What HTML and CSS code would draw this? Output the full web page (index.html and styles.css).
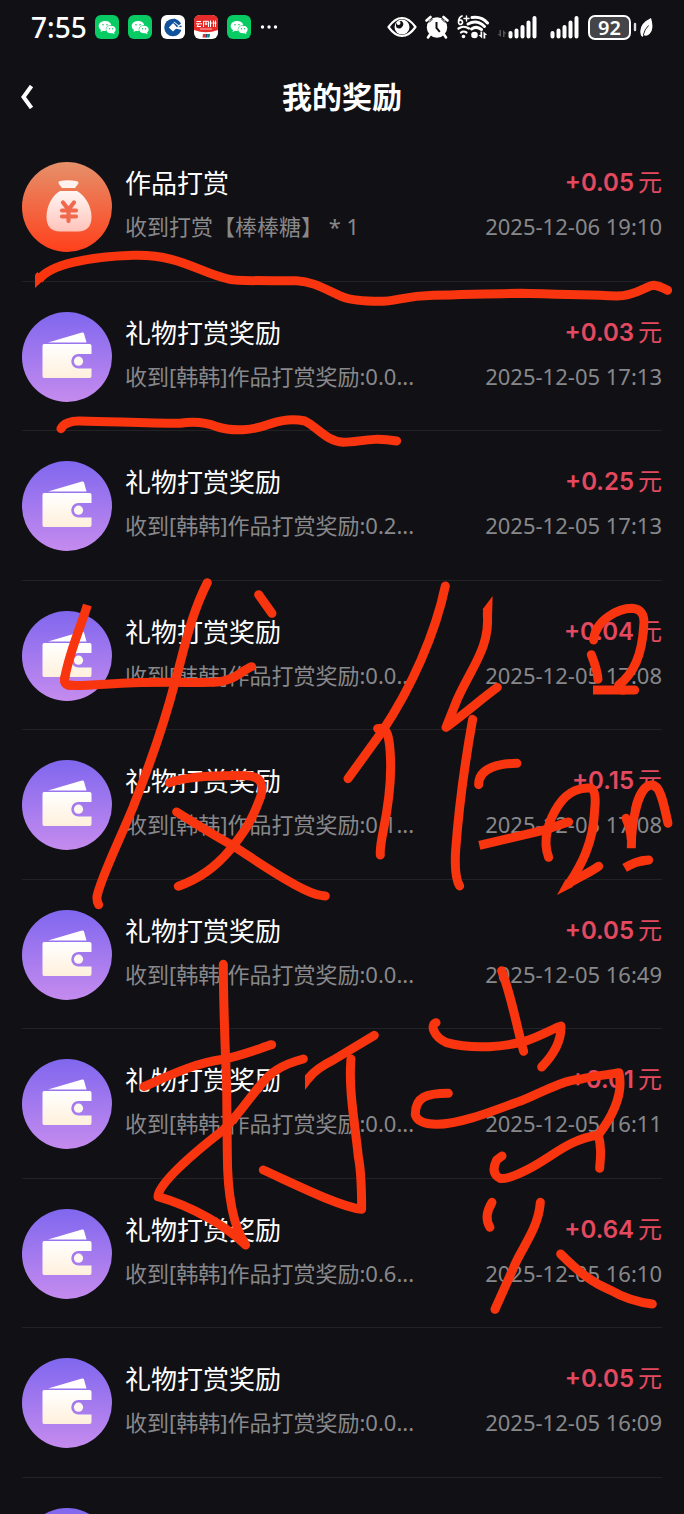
FILE: index.html
```html
<!DOCTYPE html>
<html lang="zh-CN">
<head>
<meta charset="utf-8">
<meta name="viewport" content="width=device-width, initial-scale=1">
<title>我的奖励</title>
<link rel="stylesheet" href="styles.css">
</head>
<body>
<svg class="defs" aria-hidden="true">
  <defs>
    <linearGradient id="purple" x1="0" y1="0" x2="0" y2="1"><stop offset="0" stop-color="#8067ee"/><stop offset="1" stop-color="#c58bee"/></linearGradient>
    <linearGradient id="orange" x1="0" y1="0" x2="0" y2="1"><stop offset="0" stop-color="#e5906a"/><stop offset="1" stop-color="#ff401c"/></linearGradient>
    <linearGradient id="cream" x1="0" y1="0" x2="0" y2="1"><stop offset="0" stop-color="#ffffff"/><stop offset="1" stop-color="#fff0dc"/></linearGradient>
    <linearGradient id="blush" x1="0" y1="0" x2="0" y2="1"><stop offset="0" stop-color="#fff6f3"/><stop offset="1" stop-color="#ffc3ba"/></linearGradient>
  </defs>
  <symbol id="wallet" viewBox="0 0 90 90">
    <circle cx="45" cy="45" r="45" fill="url(#purple)"/>
    <path d="M26 30.500 60 20.500Q61.500 20 62 21.500L64.500 30.500Z" fill="#fff"/>
    <path d="M22 32H67.500Q69.500 32 69.500 34V42H56.500A7.200 7.200 0 0 0 56.500 56.500H69.500V64Q69.500 66 67.500 66H22Q20.500 66 20.500 64V34Q20.500 32 22 32Z" fill="url(#cream)"/>
    <circle cx="56.500" cy="49.200" r="4.600" fill="#fff8ee"/>
  </symbol>
  <symbol id="bag" viewBox="0 0 90 90">
    <circle cx="45" cy="45" r="45" fill="url(#orange)"/>
    <path d="M38 19Q46 17.500 54 19Q57.500 19.500 56 22L53 26H40L37 22Q35.500 19.500 38 19Z" fill="#fff2ee"/>
    <path d="M38 29H55C62 33 69.500 43 69.500 55Q69.500 69 56 69.500H38Q24.500 69 24.500 55C24.500 43 31 33 38 29Z" fill="url(#blush)"/>
    <path d="M41 40.500 46.500 47.500 52 40.500M40 48.500H54M40 54.500H54M46.500 48V59" fill="none" stroke="#f0694c" stroke-width="4.200" stroke-linecap="round"/>
  </symbol>
  <symbol id="wechat" viewBox="0 0 24 24">
    <rect width="24" height="24" rx="6" fill="#08cb63"/>
    <path d="M10 6C6.400 6 3.700 8.300 3.700 11.100C3.700 12.800 4.600 14.100 6 15L5.500 17 8 15.800Q9.500 16.200 10.800 16Q9.800 10.800 16.200 10Q15.300 6 10 6Z" fill="#fff"/>
    <path d="M16 10.800C13 10.800 11.200 12.500 11.200 14.600C11.200 17.200 14 18.900 17.500 18.200L19.500 19.200 19.100 17.400Q20.700 16.200 20.700 14.600C20.700 12.500 18.700 10.800 16 10.800Z" fill="#fff"/>
    <g fill="#08cb63"><circle cx="8" cy="9.700" r=".8"/><circle cx="12" cy="9.700" r=".8"/><circle cx="14.500" cy="13.700" r=".7"/><circle cx="17.600" cy="13.700" r=".7"/></g>
  </symbol>
  <symbol id="signal" viewBox="0 0 30 24">
    <path d="M2.500 18V21.500M8.500 15.500V21.500M14.500 12V21.500M20.500 7.500V21.500M26.500 3V21.500" fill="none" stroke="#fff" stroke-width="4" stroke-linecap="round"/>
  </symbol>
</svg>

<div class="screen">
  <div class="status">
    <div class="status-left">
      <span class="clock">7:55</span>
      <svg class="app"><use href="#wechat"/></svg>
      <svg class="app"><use href="#wechat"/></svg>
      <svg class="app" viewBox="0 0 24 24">
        <rect width="24" height="24" rx="6" fill="#fff"/>
        <circle cx="12" cy="12.500" r="8.700" fill="#10529b"/>
        <path d="M12 8.200 16.200 12.400 12 16.600 7.800 12.400Z" fill="#fff"/>
        <path d="M14 12 22 12.300V15.300L14.500 13.500Z" fill="#fff"/>
        <path d="M12 9 15 3 22 9 17.500 12Z" fill="#fff"/>
        <path d="M13 3.500Q17.500 4.500 20 8.500L17.800 10.300 11.800 5.500Z" fill="#10529b"/>
        <path d="M12.500 7 17 10.800 16 11.800 12.300 8.300Z" fill="#10529b"/>
      </svg>
      <svg class="app" viewBox="0 0 24 24">
        <rect width="24" height="24" rx="6" fill="#fff"/>
        <path d="M6 0H18Q24 0 24 6V15Q12 19.500 0 15V6Q0 0 6 0Z" fill="#e52c2a"/>
        <path d="M2.500 6.500H7M2 8.800H8M4.500 9 3 11.500H7M9.500 6V12M9.500 6.300H14.500V12M12 6.500V10M10.700 9H13.500M16.500 5.500V12M15.500 8H18M19.500 5.500V12M18.500 8H22.500M21.500 5.500V12" fill="none" stroke="#fff" stroke-width="1"/>
        <path d="M6 14H18" stroke="#ffb9b0" stroke-width="1"/>
        <path d="M9 19H12L11 22.500H8.500Z" fill="#d8323c"/><path d="M12 19H14L13 22.500H11Z" fill="#18447e"/><path d="M14 19H16L15.500 22.500H13Z" fill="#118078"/>
      </svg>
      <svg class="app"><use href="#wechat"/></svg>
      <svg class="more" viewBox="0 0 18 6" fill="#fff"><circle cx="2.500" cy="3" r="1.700"/><circle cx="9" cy="3" r="1.700"/><circle cx="15.500" cy="3" r="1.700"/></svg>
    </div>
    <div class="status-right">
      <svg class="eye" viewBox="0 0 30 22">
        <path d="M1.500 11Q8 2 15 2T28.500 11Q22 20 15 20T1.500 11Z" fill="none" stroke="#fff" stroke-width="2.200" stroke-linejoin="round"/>
        <circle cx="15" cy="11" r="7.500" fill="#fff"/>
        <path d="M14.500 5A4 4 0 1 1 9.500 11.500Q7.800 7.500 10.500 5.500Z" fill="#111115"/>
        <circle cx="11.500" cy="7" r="2" fill="#fff"/>
      </svg>
      <svg class="alarm" viewBox="0 0 24 24">
        <circle cx="12" cy="12.500" r="10.200" fill="#fff"/>
        <path d="M1.500 5.500 5.500 2M22.500 5.500 18.500 2M5 19.500 3 22.500M19 19.500 21 22.500" stroke="#fff" stroke-width="2.600" stroke-linecap="round"/>
        <path d="M4 7.500 7.500 4M20 7.500 16.500 4" stroke="#111115" stroke-width="1"/>
        <path d="M11.500 7V13L14.800 16.800" fill="none" stroke="#111115" stroke-width="2"/>
      </svg>
      <svg class="wifi" viewBox="0 0 32 24">
        <g fill="none" stroke="#fff" stroke-linecap="round">
          <path d="M5 1Q1.500 2.500 1.500 7M1.500 7.500A2 2.200 0 1 0 2.300 5.500" stroke-width="1.700"/>
          <path d="M9.500 1V6M7 3.500H12" stroke-width="1.400"/>
          <path d="M15 2.500Q24.500 1 30.500 8" stroke-width="3"/>
          <path d="M11 9Q20 4 27.500 11.500" stroke-width="3"/>
          <path d="M14.500 14Q19.500 10.500 24.500 14.500" stroke-width="3"/>
          <path d="M1.500 13.500Q6.500 10 12 13.500M4 17.500Q6.500 15.500 9.500 17.500" stroke-width="2.200"/>
        </g>
        <g fill="#fff"><circle cx="6.500" cy="21.500" r="1.800"/><circle cx="17.500" cy="20" r="3.300"/><path d="M25.200 16.500V23.500L21.500 20H23.500V16.500ZM26.500 23.500V16.500L30.200 20H28.300V23.500Z"/></g>
      </svg>
      <svg class="traffic" viewBox="0 0 10 24"><path d="M4 15V22L.5 19H2.500V15ZM6 22V15L9.500 18.500H7.500V22Z" fill="#55555a"/></svg>
      <svg class="bars"><use href="#signal"/></svg>
      <svg class="bars bars-second"><use href="#signal"/></svg>
      <span class="battery">92</span>
      <svg class="leaf" viewBox="0 0 20 24">
        <path d="M2 9V15" stroke="#ddd" stroke-width="2.400" stroke-linecap="round"/>
        <path d="M18 3Q21.500 14 16.500 19Q13.500 22 10.500 20L9.500 22 8 20.500Q4.500 9.500 18 3Z" fill="#fff"/>
        <path d="M15.500 10.500Q11.500 14.500 10.300 20" fill="none" stroke="#111115" stroke-width=".9"/>
      </svg>
    </div>
  </div>

  <header class="header">
    <button class="back" type="button" aria-label="返回">
      <svg viewBox="0 0 14 24"><path d="M11.500 1 3.500 12 11.500 23" fill="none" stroke="#fff" stroke-width="4"/></svg>
    </button>
    <h1 class="title">我的奖励</h1>
  </header>

  <ul class="list">
    <li class="row"><svg class="icon"><use href="#bag"/></svg><div class="info"><div class="name">作品打赏</div><div class="note">收到打赏【棒棒糖】 * 1</div></div><div class="side"><div class="amount">+0.05<span class="unit">元</span></div><time class="date">2025-12-06 19:10</time></div></li>
    <li class="row"><svg class="icon"><use href="#wallet"/></svg><div class="info"><div class="name">礼物打赏奖励</div><div class="note">收到[韩韩]作品打赏奖励:0.0...</div></div><div class="side"><div class="amount">+0.03<span class="unit">元</span></div><time class="date">2025-12-05 17:13</time></div></li>
    <li class="row"><svg class="icon"><use href="#wallet"/></svg><div class="info"><div class="name">礼物打赏奖励</div><div class="note">收到[韩韩]作品打赏奖励:0.2...</div></div><div class="side"><div class="amount">+0.25<span class="unit">元</span></div><time class="date">2025-12-05 17:13</time></div></li>
    <li class="row"><svg class="icon"><use href="#wallet"/></svg><div class="info"><div class="name">礼物打赏奖励</div><div class="note">收到[韩韩]作品打赏奖励:0.0...</div></div><div class="side"><div class="amount">+0.04<span class="unit">元</span></div><time class="date">2025-12-05 17:08</time></div></li>
    <li class="row"><svg class="icon"><use href="#wallet"/></svg><div class="info"><div class="name">礼物打赏奖励</div><div class="note">收到[韩韩]作品打赏奖励:0.1...</div></div><div class="side"><div class="amount">+0.15<span class="unit">元</span></div><time class="date">2025-12-05 17:08</time></div></li>
    <li class="row"><svg class="icon"><use href="#wallet"/></svg><div class="info"><div class="name">礼物打赏奖励</div><div class="note">收到[韩韩]作品打赏奖励:0.0...</div></div><div class="side"><div class="amount">+0.05<span class="unit">元</span></div><time class="date">2025-12-05 16:49</time></div></li>
    <li class="row"><svg class="icon"><use href="#wallet"/></svg><div class="info"><div class="name">礼物打赏奖励</div><div class="note">收到[韩韩]作品打赏奖励:0.0...</div></div><div class="side"><div class="amount">+0.01<span class="unit">元</span></div><time class="date">2025-12-05 16:11</time></div></li>
    <li class="row"><svg class="icon"><use href="#wallet"/></svg><div class="info"><div class="name">礼物打赏奖励</div><div class="note">收到[韩韩]作品打赏奖励:0.6...</div></div><div class="side"><div class="amount">+0.64<span class="unit">元</span></div><time class="date">2025-12-05 16:10</time></div></li>
    <li class="row"><svg class="icon"><use href="#wallet"/></svg><div class="info"><div class="name">礼物打赏奖励</div><div class="note">收到[韩韩]作品打赏奖励:0.0...</div></div><div class="side"><div class="amount">+0.05<span class="unit">元</span></div><time class="date">2025-12-05 16:09</time></div></li>
    <li class="row"><svg class="icon"><use href="#wallet"/></svg></li>
  </ul>

  <svg class="ink" viewBox="0 0 684 1514" aria-hidden="true">
    <g transform="translate(0 140) scale(.3333)">
      <path class="butt" d="M116 420C150 372 270 350 400 346C540 342 600 400 690 418C720 424 840 422 890 422C940 424 980 450 1026 470"/>
      <path d="M1026 470C1046 478 1080 484 1140 484C1190 484 1210 468 1300 466C1400 464 1500 460 1560 460C1650 462 1750 464 1850 468C1910 468 1940 436 1962 436C1978 438 1990 444 2003 451"/>
      <path class="tip" d="M105 405V444L135 416L112 396Z"/>
      <path d="M183 866C190 850 215 842 240 843C350 845 430 850 540 850C580 844 620 848 650 860C700 876 760 870 800 855C850 838 880 836 915 843C950 860 980 905 1030 907C1080 907 1110 890 1190 903"/>
    </g>
    <g transform="translate(0 560) scale(.3333)">
      <path class="butt" d="M262 135C250 180 210 270 195 350Q188 376 215 376"/>
      <path d="M195 350Q188 376 215 376C260 378 330 370 400 368C500 366 590 368 640 367C700 365 720 335 755 320"/>
      <path d="M776 104 816 160"/>
      <path d="M622 68C570 170 550 280 524 370C480 540 430 660 400 740C350 860 300 960 291 1010Q290 1025 296 1034"/>
      <path d="M508 668C560 650 640 645 740 647Q800 650 782 710C750 800 720 830 690 870C640 930 590 960 535 979"/>
      <path d="M530 756C600 800 650 830 697 856C780 910 850 960 920 992Q950 1006 976 1008"/>
    </g>
    <g transform="translate(342 560) scale(.3333)">
      <path d="M310 78C280 220 210 380 120 515L18 656"/>
      <path d="M107 506C130 500 145 510 146 620C146 760 110 840 115 885"/>
      <path class="tip" d="M452 108 422 148 430 175 450 175Z"/>
      <path d="M436 160C445 260 390 320 345 420L312 502C370 460 420 415 466 382"/>
      <path d="M392 478C370 600 350 750 341 870Q336 950 353 978"/>
      <path d="M410 674C410 620 480 610 525 610"/>
      <path class="butt" d="M412 856 600 812"/><path d="M600 812C640 802 660 790 680 786"/>
      <path d="M755 240C760 180 830 145 870 145Q912 148 905 200C900 290 870 345 830 375"/>
      <path d="M748 284Q766 330 768 358"/>
      <path class="butt" d="M753 390H850"/><path d="M840 390H878"/>
      <path d="M620 892C600 840 620 780 650 735C680 690 720 682 745 684Q765 690 758 750C755 850 715 920 682 970"/>
      <path d="M682 970C710 952 740 940 770 919"/>
      <path class="tip" d="M645 1005 671 958 692 981Z"/>
      <path d="M852 775Q866 805 868 840"/>
      <path class="butt" d="M868 865C868 780 890 675 930 675"/>
      <path d="M880 750C890 700 910 675 930 675C955 675 965 730 978 790"/>
      <path class="butt" d="M848 924Q880 905 910 901"/><path d="M900 903 920 900"/>
    </g>
    <g transform="translate(100 940) scale(.3333)">
      <path d="M370 73C370 200 375 300 380 440L382 640C382 760 400 860 437 915C380 860 280 800 174 770C175 730 280 640 370 570C440 500 480 420 530 390Q560 370 610 357"/>
      <path d="M132 440C200 410 280 370 370 358C430 345 480 325 515 314"/>
      <path d="M628 412Q650 385 700 360L823 286"/><path class="tip" d="M615 405V450L640 418Z"/>
      <path d="M753 357C745 450 765 550 775 650C785 700 785 750 785 808C720 800 600 740 490 690"/>
    </g>
    <g transform="translate(380 940) scale(.3333)">
      <path d="M168 248C150 255 160 290 200 308C280 330 380 320 440 302C490 285 520 265 543 258Q545 320 485 381"/>
      <path d="M365 92C395 170 410 260 431 334"/>
      <path d="M205 460C140 460 105 470 106 525Q115 553 170 553C250 553 370 500 430 480C520 440 560 420 600 418C650 405 690 405 717 398Q735 480 655 585C560 600 520 650 440 690Q380 720 360 715Q330 700 350 660L366 648"/>
      <path d="M655 585C665 620 662 650 659 685"/>
      <path d="M336 787Q310 830 330 862"/>
      <path d="M481 787C475 870 420 930 400 985L345 1108"/>
      <path d="M542 942C600 1000 640 1030 690 1050Q750 1085 817 1092"/>
    </g>
  </svg>
</div>
</body>
</html>
```

FILE: styles.css
```css
* {
  box-sizing: border-box;
}

body {
  margin: 0;
  background: #111115;
  color: #fff;
  font-family: "Noto Sans", "Noto Sans CJK SC", sans-serif;
}

.defs {
  position: absolute;
  width: 0;
  height: 0;
}

.screen {
  position: relative;
  display: flex;
  flex-direction: column;
  height: 100vh;
  overflow: hidden;
}

.status {
  display: flex;
  justify-content: space-between;
  align-items: center;
  height: 54px;
  padding: 0 31px;
  flex: none;
}

.status-left,
.status-right {
  display: flex;
  align-items: center;
}

.status-left {
  gap: 10px;
}

.clock {
  font-size: 28px;
  font-weight: 500;
  line-height: 54px;
  margin-right: -2px;
}

.app {
  width: 24px;
  height: 24px;
  margin-right: -1px;
}

.more {
  width: 18px;
  height: 6px;
}

.eye {
  width: 30px;
  height: 22px;
}

.alarm {
  width: 24px;
  height: 24px;
  margin-left: 8px;
}

.wifi {
  width: 32px;
  height: 24px;
  margin-left: 8px;
}

.traffic {
  width: 10px;
  height: 24px;
  margin-left: 8px;
}

.bars {
  width: 30px;
  height: 24px;
  margin-left: 1px;
}

.bars-second {
  margin-left: 12px;
}

.battery {
  width: 43px;
  height: 25px;
  margin-left: 8px;
  border: 2px solid #fff;
  border-radius: 7px;
  background: #454549;
  font-size: 20px;
  font-weight: 600;
  line-height: 21px;
  text-align: center;
}

.leaf {
  width: 20px;
  height: 24px;
  margin-left: 2px;
}

.header {
  display: grid;
  grid-template-columns: 60px 1fr 60px;
  align-items: center;
  height: 78px;
  padding-top: 8px;
  flex: none;
}

.back {
  display: flex;
  align-items: center;
  height: 60px;
  padding: 0 0 0 20px;
  border: 0;
  background: none;
}

.back svg {
  width: 14px;
  height: 24px;
}

.title {
  margin: 0;
  font-size: 30px;
  font-weight: 700;
  line-height: 60px;
  text-align: center;
}

.list {
  flex: 1;
  min-height: 0;
  margin: 0;
  padding: 0 22px;
  overflow: hidden;
  list-style: none;
}

.row {
  display: flex;
  gap: 13px;
  padding: 30px 0 29px;
  border-bottom: 1px solid #232327;
}

.row:nth-child(even) {
  padding-bottom: 28px;
}

.icon {
  width: 90px;
  height: 90px;
  flex: none;
}

.info {
  flex: 1;
  min-width: 0;
  white-space: nowrap;
}

.name {
  font-size: 26px;
  line-height: 42px;
}

.note,
.date {
  color: #88888b;
  font-size: 22px;
  line-height: 44px;
}

.side {
  text-align: right;
  white-space: nowrap;
}

.amount {
  color: #e44960;
  font-family: Inter, "Noto Sans CJK SC", sans-serif;
  font-size: 24px;
  font-weight: 600;
  line-height: 42px;
}

.unit {
  margin-left: 4px;
  font-weight: 400;
}

.date {
  display: block;
}

/* hand-drawn marks over the list */
.ink {
  position: absolute;
  inset: 0;
  width: 100%;
  pointer-events: none;
  fill: none;
  stroke: #f8350f;
  stroke-width: 27;
  stroke-linecap: round;
  stroke-linejoin: round;
}

.ink .butt {
  stroke-linecap: butt;
}

.ink .tip {
  fill: #f8350f;
  stroke: none;
}
```
